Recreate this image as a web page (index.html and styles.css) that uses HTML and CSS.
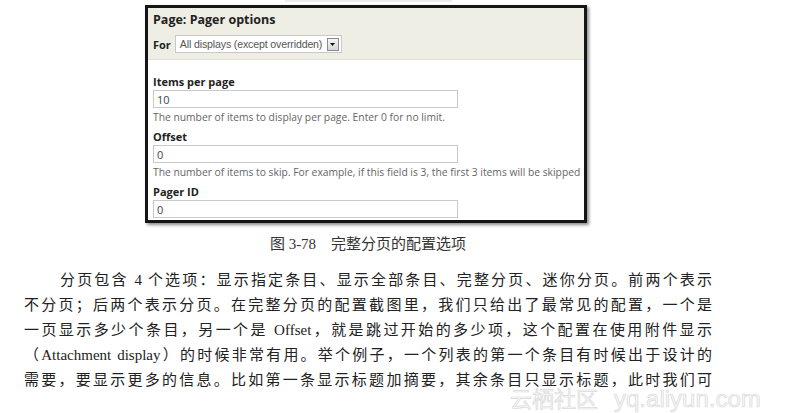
FILE: index.html
```html
<!DOCTYPE html>
<html lang="zh-CN">

<head>
    <meta charset="UTF-8">
    <meta name="viewport" content="width=device-width, initial-scale=1.0">
    <title>完整分页的配置选项</title>
    <link rel="stylesheet" href="styles.css">
</head>

<body>
    <div class="top-strip"></div>

    <div class="panel">
        <div class="panel-head">
            <h2 class="panel-title">Page: Pager options</h2>
            <div class="for-row">
                <span class="for-label">For</span>
                <div class="select">
                    <span class="select-text">All displays (except overridden)</span>
                    <span class="select-btn">
                        <svg width="5" height="3" viewBox="0 0 5 3"><path d="M0 0h5L2.5 3z" fill="#111"/></svg>
                    </span>
                </div>
            </div>
        </div>
        <div class="panel-body">
            <div class="field">
                <div class="field-label">Items per page</div>
                <input class="field-input" type="text" value="10" readonly>
                <div class="field-desc">The number of items to display per page. Enter 0 for no limit.</div>
            </div>
            <div class="field">
                <div class="field-label">Offset</div>
                <input class="field-input" type="text" value="0" readonly>
                <div class="field-desc">The number of items to skip. For example, if this field is 3, the first 3 items will be skipped</div>
            </div>
            <div class="field">
                <div class="field-label">Pager ID</div>
                <input class="field-input" type="text" value="0" readonly>
            </div>
        </div>
    </div>

    <div class="article">
        <p class="caption">图 3-78　完整分页的配置选项</p>
        <p class="para">
            <span class="line first">分页包含 4 个选项：显示指定条目、显示全部条目、完整分页、迷你分页。前两个表示</span>
            <span class="line">不分页；后两个表示分页。在完整分页的配置截图里，我们只给出了最常见的配置，一个是</span>
            <span class="line">一页显示多少个条目，另一个是 Offset，就是跳过开始的多少项，这个配置在使用附件显示</span>
            <span class="line">（Attachment display）的时候非常有用。举个例子，一个列表的第一个条目有时候出于设计的</span>
            <span class="line">需要，要显示更多的信息。比如第一条显示标题加摘要，其余条目只显示标题，此时我们可</span>
        </p>
    </div>

    <!-- 水印 -->
    <div class="watermark"><span class="wm-cn">云栖社区</span><span class="wm-en">yq.aliyun.com</span></div>
</body>

</html>
```

FILE: styles.css
```css
* {
    margin: 0;
    padding: 0;
    box-sizing: border-box;
}

body {
    position: relative;
    width: 787px;
    height: 413px;
    overflow: hidden;
    background: #fff;
    font-family: "Open Sans", sans-serif;
    color: #222;
}

.top-strip {
    width: 167px;
    height: 2px;
    margin-left: 285px;
    background: #ececec;
}

/* 截图面板 */
.panel {
    width: 442px;
    height: 218px;
    margin: 3px 0 0 145px;
    border: 3px solid #151515;
    box-shadow: 2px 2px 3px rgba(0, 0, 0, 0.45);
    overflow: hidden;
    background: #fff;
}

.panel-head {
    height: 52px;
    padding: 4px 5px 0;
    background: #efeee5;
    border-bottom: 1px solid #e3e2d9;
}

.panel-title {
    font-size: 12.5px;
    font-weight: 700;
    line-height: 16px;
    color: #222;
}

.for-row {
    display: flex;
    align-items: center;
    gap: 4px;
    margin-top: 7px;
}

.for-label {
    font-size: 11px;
    font-weight: 700;
}

.select {
    display: flex;
    align-items: center;
    width: 167px;
    height: 18px;
    padding-left: 4px;
    border: 1px solid #c8c8c8;
    background: #fff;
    font-family: "Liberation Sans", Arial, sans-serif;
    font-size: 10.6px;
    letter-spacing: -0.15px;
    color: #555;
}

.select-text {
    flex: 1;
    white-space: nowrap;
}

.select-btn {
    display: flex;
    align-items: center;
    justify-content: center;
    width: 12px;
    height: 13px;
    margin-right: 2px;
    border: 1px solid #8a8a8a;
    background: linear-gradient(#f6f6f6, #d6d6d6);
}

.panel-body {
    padding: 15px 5px 0;
}

.field + .field {
    margin-top: 7px;
}

.field-label {
    font-size: 11px;
    font-weight: 700;
    line-height: 14px;
    color: #222;
}

.field-input {
    display: block;
    width: 305px;
    height: 18px;
    margin-top: 1px;
    padding: 0 3px;
    border: 1px solid #c9c9c9;
    outline: none;
    background: #fff;
    font-family: "Open Sans", sans-serif;
    font-size: 11px;
    color: #444;
}

.field-desc {
    margin-top: 3px;
    font-size: 10.3px;
    line-height: 12px;
    color: #666;
    white-space: nowrap;
}

/* 正文 */
.article {
    width: 688px;
    margin-left: 24px;
    font-family: "Liberation Serif", "Noto Sans CJK SC", serif;
    color: #222;
}

.caption {
    margin-top: 11px;
    font-size: 15px;
    line-height: 20px;
    text-align: center;
    color: #333;
}

.para {
    margin-top: 14px;
    font-size: 15px;
    line-height: 25px;
}

.line {
    display: block;
    text-align: justify;
    text-align-last: justify;
}

.line.first {
    padding-left: 36px;
}

.watermark {
    position: absolute;
    left: 510px;
    top: 386px;
    font-family: "Liberation Sans", "Noto Sans CJK SC", sans-serif;
    font-size: 22px;
    line-height: 26px;
    color: #f8f8f8;
    -webkit-text-stroke: 0.7px #dadada;
    white-space: nowrap;
}

.wm-en {
    margin-left: 16px;
    font-size: 24px;
}
```
